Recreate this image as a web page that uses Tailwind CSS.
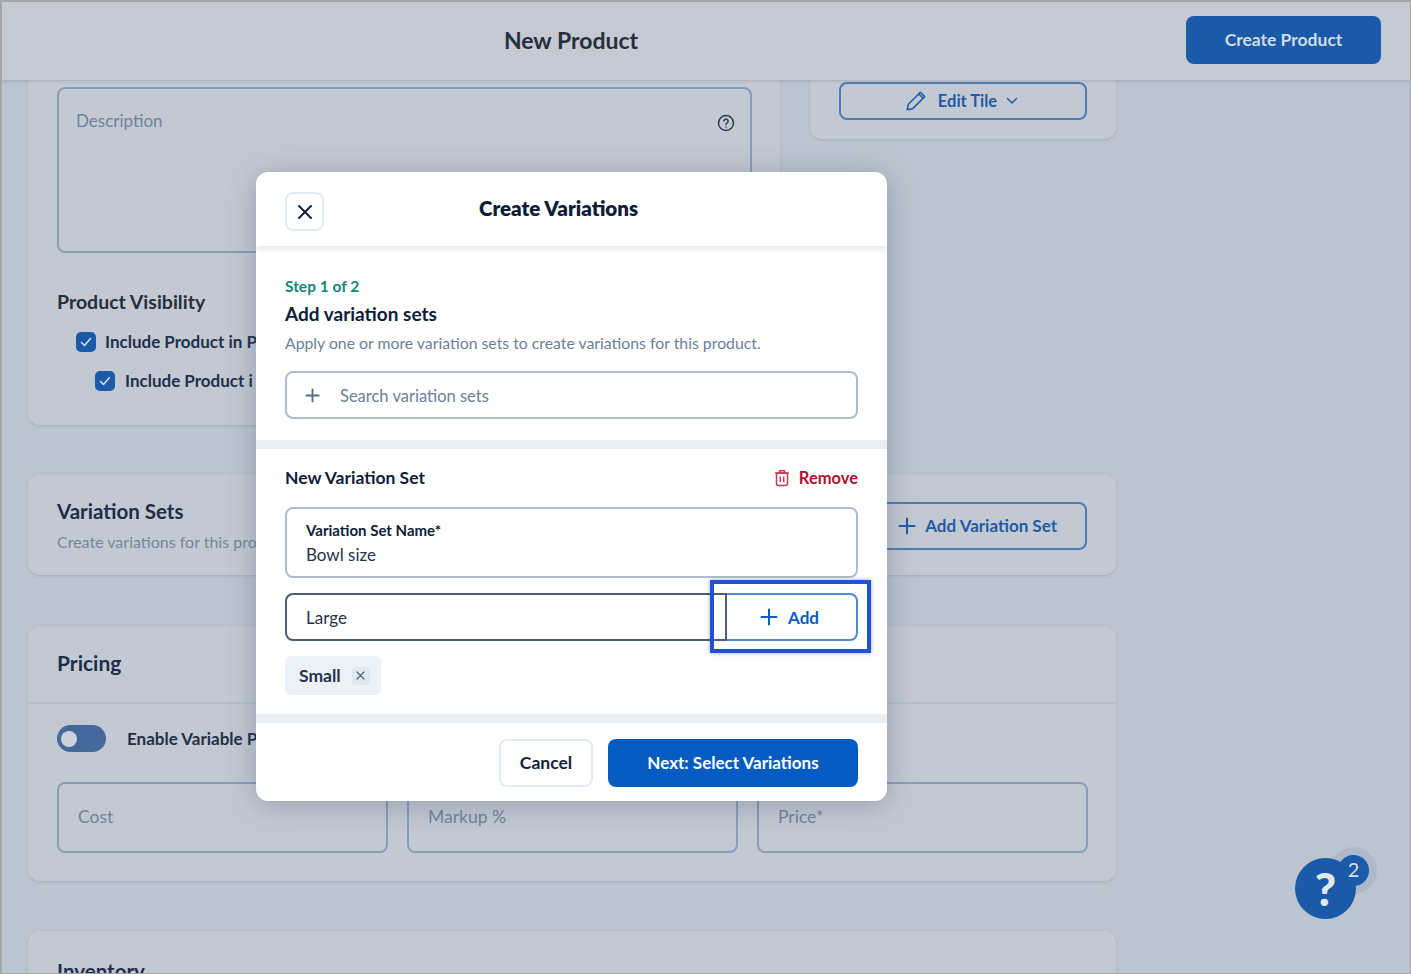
<!DOCTYPE html>
<html lang="en">
<head>
    <meta charset="UTF-8">
    <title>New Product</title>
    <script src="https://cdn.jsdelivr.net/npm/@tailwindcss/browser@4"></script>
</head>
<body class="m-0 h-[974px] overflow-hidden font-['Lato',sans-serif]">
<div class="relative h-[974px] w-[1411px] overflow-hidden border border-[#a3a7aa] border-t-2 border-l-2 bg-[#bcc5cf]">

    <!-- Header -->
    <header class="relative z-10 h-[78px] bg-[#c4c9d2] shadow-[0_1px_3px_rgba(90,105,125,0.3)]">
        <div class="flex h-full items-start">
            <h1 class="mt-[21px] w-[1138px] text-center text-[23px] font-bold text-[#272f3c]">New Product</h1>
            <button class="mt-[14px] ml-[46px] h-[48px] w-[195px] rounded-lg bg-[#1a5aa8] text-[17.5px] font-bold text-[#d3dbe6]">Create Product</button>
        </div>
    </header>

    <!-- Page behind the modal -->
    <main class="w-[1114px] pl-[26px]">
        <div class="flex h-[345px] gap-[30px]">
            <section class="h-full w-[752px] rounded-b-xl bg-[#c3c9d2] px-[29px] pt-[7px] shadow-[0_1px_3px_rgba(90,105,125,0.25)]">
                <div class="relative h-[166px] w-[695px] rounded-lg border-2 border-[#8a9db8] px-[17px] pt-[19px] text-[17px] text-[#71839b]">
                    Description
                    <svg class="absolute right-[15px] top-[25px]" width="18" height="18" viewBox="0 0 18 18" fill="none" stroke="#2d3b4e" stroke-width="1.5" stroke-linecap="round"><circle cx="9" cy="9" r="7.5"/><path d="M6.9 7.1a2.1 2.1 0 1 1 3.2 1.8c-.7.4-1.1.8-1.1 1.6"/><path d="M9 13v.1"/></svg>
                </div>
                <h3 class="mt-[34px] text-[19.5px] font-bold text-[#272f3c]">Product Visibility</h3>
                <div class="mt-[13px] ml-[19px] flex items-center gap-[9px] text-[17px] font-bold whitespace-nowrap text-[#223049]">
                    <span class="flex h-5 w-5 items-center justify-center rounded-[5px] bg-[#1a5aa8]">
                        <svg width="14" height="14" viewBox="0 0 14 14" fill="none" stroke="#d3dbe6" stroke-width="1.6" stroke-linecap="round" stroke-linejoin="round"><path d="M2.5 7.5l3 3 6-7"/></svg>
                    </span>
                    Include Product in P
                </div>
                <div class="mt-[13px] ml-[38px] flex items-center gap-[10px] text-[17px] font-bold whitespace-nowrap text-[#223049]">
                    <span class="flex h-5 w-5 items-center justify-center rounded-[5px] bg-[#1a5aa8]">
                        <svg width="14" height="14" viewBox="0 0 14 14" fill="none" stroke="#d3dbe6" stroke-width="1.6" stroke-linecap="round" stroke-linejoin="round"><path d="M2.5 7.5l3 3 6-7"/></svg>
                    </span>
                    Include Product i
                </div>
            </section>
            <section class="h-[59px] w-[306px] rounded-b-xl bg-[#c3c9d2] pt-[2px] pl-[29px] shadow-[0_1px_3px_rgba(90,105,125,0.25)]">
                <button class="flex h-[38px] w-[248px] items-center justify-center rounded-lg border-2 border-[#4f7bb3] pr-[4px] text-[16.5px] font-bold text-[#1f5ba6]">
                    <svg class="mr-[10px]" width="24" height="24" viewBox="0 0 22 22" fill="none" stroke="#1f5ba6" stroke-width="1.4" stroke-linejoin="round"><path d="M3 19l1-5L15 3l4 4L8 18z"/><path d="M13.5 4.5l4 4"/></svg>
                    Edit Tile
                    <svg class="ml-[9px]" width="12" height="8" viewBox="0 0 12 8" fill="none" stroke="#1f5ba6" stroke-width="1.5" stroke-linecap="round" stroke-linejoin="round"><path d="M1.5 1.5L6 6l4.5-4.5"/></svg>
                </button>
            </section>
        </div>

        <section class="mt-[49px] flex h-[101px] w-[1088px] justify-between rounded-xl bg-[#c3c9d2] pt-[22px] pr-[29px] pl-[29px] shadow-[0_1px_3px_rgba(90,105,125,0.25)]">
            <div>
                <h3 class="text-[20.5px] font-bold text-[#1e2e49]">Variation Sets</h3>
                <p class="mt-[3px] text-[16px] text-[#76879d]">Create variations for this pro</p>
            </div>
            <button class="mt-[6px] flex h-[48px] w-[248px] items-center justify-end rounded-lg border-2 border-[#4f7bb3] pr-[28px] text-[17px] font-bold text-[#1f5ba6]">
                <svg class="mr-[9px]" width="18" height="18" viewBox="0 0 18 18" fill="none" stroke="#1f5ba6" stroke-width="2" stroke-linecap="round"><path d="M9 1.5v15M1.5 9h15"/></svg>
                Add Variation Set
            </button>
        </section>

        <section class="mt-[51px] h-[255px] w-[1088px] rounded-xl bg-[#c3c9d2] shadow-[0_1px_3px_rgba(90,105,125,0.25)]">
            <div class="flex h-[78px] items-center border-b-2 border-[#b3bfcd] pb-[2px] pl-[29px] text-[21px] font-bold text-[#1e2e49]">Pricing</div>
            <div class="mt-[21px] flex items-center pl-[29px]">
                <span class="flex h-[27px] w-[49px] items-center rounded-full bg-[#45699a] pl-[4px]"><span class="h-[16px] w-[16px] rounded-full bg-[#ccd2da]"></span></span>
                <span class="ml-[21px] text-[17px] font-bold whitespace-nowrap text-[#223049]">Enable Variable P</span>
            </div>
            <div class="mt-[30px] flex gap-[19px] pl-[29px]">
                <div class="flex h-[71px] w-[331px] items-center rounded-lg border-2 border-[#8a9db8] pl-[19px] text-[17.5px] text-[#71839b]">Cost</div>
                <div class="flex h-[71px] w-[331px] items-center rounded-lg border-2 border-[#8a9db8] pl-[19px] text-[17.5px] text-[#71839b]">Markup %</div>
                <div class="flex h-[71px] w-[331px] items-center rounded-lg border-2 border-[#8a9db8] pl-[19px] text-[17.5px] text-[#71839b]">Price*</div>
            </div>
        </section>

        <section class="mt-[50px] h-[80px] w-[1088px] rounded-xl bg-[#c3c9d2] pt-[25px] pl-[29px] shadow-[0_1px_3px_rgba(90,105,125,0.25)]">
            <h3 class="text-[20.5px] font-bold text-[#1e2e49]">Inventory</h3>
        </section>
    </main>

    <!-- Help bubble -->
    <div class="absolute top-[845px] left-[1293px] h-[74px] w-[86px]">
        <div class="absolute top-0 left-[35px] h-[47px] w-[47px] rounded-full bg-[#adb9c8]"></div>
        <div class="absolute top-[11px] left-0 flex h-[61px] w-[61px] items-center justify-center rounded-full bg-[#1a5aa8] text-[46px] leading-none font-black text-[#e3e8ee]">?</div>
        <div class="absolute top-[8px] left-[43px] flex h-[31px] w-[31px] items-center justify-center rounded-full bg-[#1a5aa8] pb-[4px] text-[20px] text-[#d8dfe8]">2</div>
    </div>

    <!-- Modal -->
    <div class="absolute top-[170px] left-[254px] h-[629px] w-[631px] overflow-hidden rounded-xl bg-white shadow-[0_4px_30px_rgba(60,80,110,0.35)]">
        <div class="relative flex h-[74px] shadow-[0_3px_6px_rgba(120,140,165,0.2)]">
            <button class="mt-[20px] ml-[29px] flex h-[39px] w-[39px] items-center justify-center rounded-lg border-2 border-[#e4eaf2]">
                <svg width="16" height="16" viewBox="0 0 16 16" fill="none" stroke="#12213f" stroke-width="2" stroke-linecap="round"><path d="M2 2l12 12M14 2L2 14"/></svg>
            </button>
            <h2 class="mt-[21px] ml-[155px] text-[20.5px] font-extrabold whitespace-nowrap text-[#0f1d3a]">Create Variations</h2>
        </div>

        <div class="h-[194px] px-[29px] pt-[29px]">
            <p class="text-[15.5px] font-bold text-[#14867c]">Step 1 of 2</p>
            <h3 class="mt-[2px] text-[19px] font-bold text-[#0f1d3a]">Add variation sets</h3>
            <p class="mt-[2px] text-[15.8px] text-[#6c7f98]">Apply one or more variation sets to create variations for this product.</p>
            <div class="mt-[17px] flex h-[48px] items-center rounded-lg border-2 border-[#aebcd0] pt-[1px] pl-[18px] text-[16.5px] text-[#6c7f98]">
                <svg class="mr-[20px]" width="15" height="15" viewBox="0 0 16 16" fill="none" stroke="#54708f" stroke-width="2" stroke-linecap="round"><path d="M8 1.5v13M1.5 8h13"/></svg>
                Search variation sets
            </div>
        </div>

        <div class="h-[9px] bg-[#e9eef3]"></div>

        <div class="h-[265px] px-[29px] pt-[16px]">
            <div class="flex items-center justify-between">
                <h3 class="text-[17.5px] font-bold text-[#0f1d3a]">New Variation Set</h3>
                <span class="flex items-center text-[16.5px] font-bold text-[#b01030]">
                    <svg class="mr-[9px]" width="16" height="18" viewBox="0 0 16 18" fill="none" stroke="#c43a50" stroke-width="1.5" stroke-linejoin="round"><path d="M1 4h14M5.5 4V1.7h5V4"/><rect x="2.5" y="4" width="11" height="12.5" rx="2"/><path d="M6.3 7.5v5.5M9.7 7.5v5.5"/></svg>
                    Remove
                </span>
            </div>
            <div class="mt-[16px] h-[71px] rounded-lg border-2 border-[#aebcd0] pt-[12px] pl-[19px]">
                <p class="text-[15px] leading-[18px] font-bold text-[#0f1d3a]">Variation Set Name*</p>
                <p class="mt-[6px] text-[17px] leading-[20px] text-[#26334a]">Bowl size</p>
            </div>
            <div class="mt-[15px] flex h-[48px]">
                <div class="flex w-[442px] items-center rounded-l-lg border-2 border-[#4c5d75] pl-[19px] text-[17px] text-[#26334a]">Large</div>
                <button class="flex flex-1 items-center justify-center rounded-r-lg border-2 border-l-0 border-[#4f8bd0] pr-[4px] text-[17px] font-bold text-[#0b5cc0]">
                    <svg class="mr-[10px]" width="18" height="18" viewBox="0 0 18 18" fill="none" stroke="#0b5cc0" stroke-width="2" stroke-linecap="round"><path d="M9 1.5v15M1.5 9h15"/></svg>
                    Add
                </button>
            </div>
            <div class="mt-[15px] flex h-[39px] w-[96px] items-center rounded-md bg-[#ebf1f7] pl-[14px] text-[17.5px] font-bold text-[#26334a]">
                Small
                <span class="ml-[11px] flex h-[18px] w-[18px] items-center justify-center rounded-sm bg-[#e0e7ef]">
                    <svg width="9" height="9" viewBox="0 0 9 9" fill="none" stroke="#4e6078" stroke-width="1.2" stroke-linecap="round"><path d="M1 1l7 7M8 1L1 8"/></svg>
                </span>
            </div>
        </div>

        <div class="h-[9px] bg-[#e9eef3]"></div>

        <div class="flex h-[78px] items-start justify-end gap-[15px] px-[29px] pt-[16px]">
            <button class="h-[48px] w-[94px] rounded-lg border-2 border-[#e4eaf2] text-[17.5px] font-bold text-[#14233f]">Cancel</button>
            <button class="h-[48px] w-[250px] rounded-lg bg-[#045cc2] text-[17px] font-bold text-white">Next: Select Variations</button>
        </div>
    </div>

    <!-- Highlight box around the Add button -->
    <div class="absolute top-[578px] left-[708px] h-[73px] w-[161px] border-4 border-[#1f52d6] shadow-[0_0_4px_rgba(30,60,120,0.45)]"></div>
</div>
</body>
</html>
